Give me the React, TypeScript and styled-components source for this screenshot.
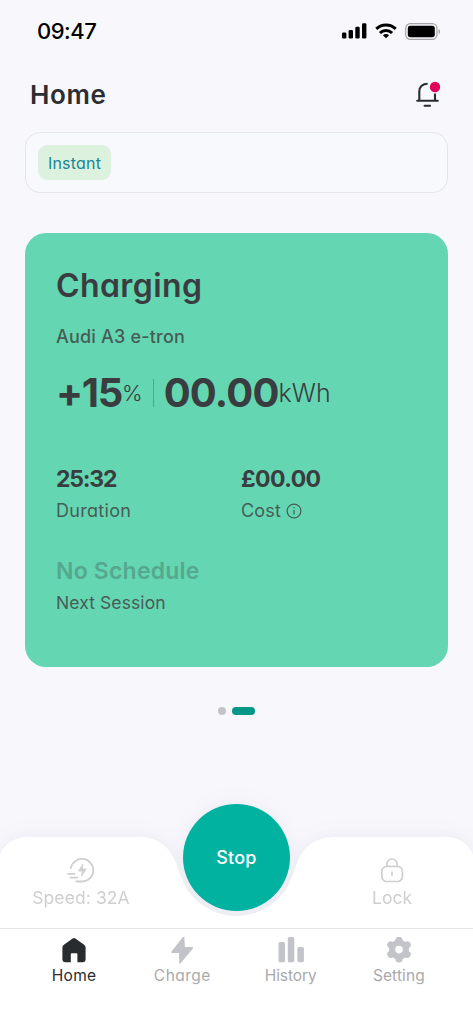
import React from "react";
import styled, { createGlobalStyle } from "styled-components";

const GlobalStyle = createGlobalStyle`
  *, *::before, *::after { box-sizing: border-box; }
  body {
    margin: 0;
    background: #f7f7fc;
    font-family: Inter, "Open Sans", sans-serif;
    font-feature-settings: "cv11" 1;
    color: #2b2d31;
  }
`;

const Screen = styled.div`
  width: 473px;
  height: 1024px;
  display: flex;
  flex-direction: column;
  overflow: hidden;
  background: #f7f7fc;
`;

interface TextProps {
  $size: number;
  $weight?: number;
  $track?: number;
  $color?: string;
  $line?: number;
}

const Text = styled.span<TextProps>`
  display: block;
  white-space: nowrap;
  font-size: ${(p) => p.$size}px;
  font-weight: ${(p) => p.$weight ?? 400};
  letter-spacing: ${(p) => p.$track ?? 0}px;
  color: ${(p) => p.$color ?? "#3a3d40"};
  line-height: ${(p) => p.$line ?? 24}px;
`;

const StatusBar = styled.header`
  height: 62px;
  padding: 0 32px 0 37px;
  display: flex;
  align-items: center;
  justify-content: space-between;
`;

const StatusIcons = styled.div`
  display: flex;
  align-items: center;
  gap: 8px;
`;

const TitleBar = styled.div`
  height: 70px;
  padding: 0 32px 5px 30px;
  display: flex;
  align-items: center;
  justify-content: space-between;
`;

const ModeBar = styled.div`
  height: 61px;
  margin: 0 25px;
  padding: 0 12px;
  display: flex;
  align-items: center;
  border: 1.5px solid #e4e5e9;
  border-radius: 15px;
  background: #f8f9fd;
`;

const Chip = styled.div`
  width: 73px;
  height: 35px;
  display: flex;
  align-items: center;
  justify-content: center;
  border-radius: 9px;
  background: #dcf1de;
`;

const Card = styled.section`
  height: 434px;
  margin: 40px 25px 0;
  padding: 34px 31px 0;
  border-radius: 21px;
  background: #65d6b2;
`;

const VehicleName = styled(Text)`
  margin-top: 20px;
`;

const Reading = styled.div`
  height: 48px;
  margin-top: 20px;
  display: flex;
  align-items: center;
`;

const Rule = styled.div`
  width: 1px;
  height: 28px;
  margin: 0 10px 0 11px;
  background: #4fa58e;
`;

const Stats = styled.div`
  margin-top: 50px;
  display: grid;
  grid-template-columns: 185px 1fr;
`;

const Stat = styled.div`
  display: flex;
  flex-direction: column;
  gap: 8px;
`;

const NextStat = styled(Stat)`
  margin-top: 36px;
`;

const WithIcon = styled.div`
  display: flex;
  align-items: center;
  gap: 5px;
`;

const Pager = styled.div`
  flex: 1;
  padding-top: 40px;
  display: flex;
  justify-content: center;
  gap: 6px;
`;

const Dot = styled.span<{ $active?: boolean }>`
  width: ${(p) => (p.$active ? 23 : 8)}px;
  height: 8px;
  border-radius: 4px;
  background: ${(p) => (p.$active ? "#049787" : "#c3c3c9")};
`;

const Dock = styled.div`
  position: relative;
  height: 91px;
  filter: drop-shadow(0 -1px 9px rgba(70, 74, 110, 0.07));
`;

const DockSurface = styled.div`
  height: 91px;
  padding-top: 19px;
  display: flex;
  justify-content: space-between;
  background: #fff;
  clip-path: path("M0 18C4 7 14 0 28 0H138C158 0 170 10 176 26L180 37A59 59 0 0 0 293 37L297 26C303 10 315 0 335 0H445C459 0 469 7 473 18V91H0Z");
`;

const DockAction = styled.button`
  width: 162px;
  height: 56px;
  padding: 0;
  border: 0;
  background: none;
  font: inherit;
  font-feature-settings: inherit;
  display: flex;
  flex-direction: column;
  align-items: center;
  gap: 2px;
`;

const StopButton = styled.button`
  position: absolute;
  left: 50%;
  top: -33px;
  width: 107px;
  height: 107px;
  margin-left: -53.5px;
  padding: 0;
  border: 0;
  border-radius: 50%;
  background: #02b2a1;
  font: inherit;
  display: flex;
  align-items: center;
  justify-content: center;
`;

const TabBar = styled.nav`
  position: relative;
  height: 96px;
  padding: 8px 20px 0;
  display: grid;
  grid-template-columns: repeat(4, 1fr);
  border-top: 1px solid #e5e5e8;
  background: #fff;
`;

const Tab = styled.div`
  display: flex;
  flex-direction: column;
  align-items: center;
  gap: 1px;
`;

const SignalIcon = () => (
  <svg width="25" height="16" viewBox="0 0 25 16">
    <rect x="0" y="9.5" width="4.4" height="6" rx="1.3" />
    <rect x="6.6" y="7" width="4.4" height="8.5" rx="1.3" />
    <rect x="13.3" y="3.7" width="4.4" height="11.8" rx="1.3" />
    <rect x="20" y="0.3" width="4.4" height="15.2" rx="1.3" />
  </svg>
);

const WifiIcon = () => (
  <svg width="22" height="16" viewBox="0 0 22 16" fill="none" stroke="#000" strokeWidth="3">
    <path d="M1.3 5.9a14 14 0 0 1 19.4 0" />
    <path d="M4.9 10a8.9 8.9 0 0 1 12.2 0" />
    <path d="M11 15.3 7.9 12.2a4.4 4.4 0 0 1 6.2 0z" fill="#000" stroke="none" />
  </svg>
);

const BatteryIcon = () => (
  <svg width="36" height="17" viewBox="0 0 36 17">
    <rect x="0.7" y="0.7" width="31.2" height="15.6" rx="4.6" fill="none" stroke="#a4a4a8" strokeWidth="1.2" />
    <rect x="2.8" y="2.8" width="27" height="11.4" rx="2.6" />
    <path d="M33.6 6v5.2c1.9-.8 1.9-4.4 0-5.2z" fill="#a4a4a8" />
  </svg>
);

const BellIcon = () => (
  <svg width="26" height="28" viewBox="0 0 26 28" fill="none" stroke="#292c30" strokeWidth="2.1">
    <path d="M4.3 19v-8.4C4.3 5.6 7.8 2.8 12.6 2.8M20 12.4V19" />
    <path d="M2.2 19.8h20.6" strokeLinecap="round" />
    <path d="M9.6 24.8h5.4" strokeLinecap="round" />
    <circle cx="20" cy="6" r="5.2" fill="#df0759" stroke="none" />
  </svg>
);

const InfoIcon = () => (
  <svg width="16" height="16" viewBox="0 0 16 16" fill="none" stroke="#465d57" strokeWidth="1.2">
    <circle cx="8" cy="8" r="6.9" />
    <path d="M8 7v4.5" />
    <circle cx="8" cy="4.8" r="0.8" fill="#465d57" stroke="none" />
  </svg>
);

const SpeedIcon = () => (
  <svg width="28" height="28" viewBox="0 0 28 28" fill="none" stroke="#cfcfd1" strokeWidth="1.8" strokeLinecap="round">
    <path d="M3.9 12.2A11.3 11.3 0 1 1 15 25.5H9.3" />
    <path d="M1 17.8h6.4M3.3 21.6h7" />
    <path d="M15.7 8.3 11.5 15h3.7l-.7 5 4.8-7h-3.8z" fill="#cfcfd1" strokeWidth=".8" strokeLinejoin="round" />
  </svg>
);

const LockIcon = () => (
  <svg width="28" height="28" viewBox="0 0 28 28" fill="none" stroke="#cfcfd1" strokeWidth="1.7" strokeLinecap="round">
    <rect x="3.8" y="10.3" width="20.6" height="15.2" rx="5" />
    <path d="M8.8 10.2V8.2a5.2 5.2 0 0 1 10.4 0v2M14 16.4v2.6" />
  </svg>
);

const HomeIcon = () => (
  <svg width="28" height="28" viewBox="0 0 28 28" fill="#292c2e">
    <path d="M12.7 1.6a2.1 2.1 0 0 1 2.6 0l8.5 5.8a3.7 3.7 0 0 1 1.8 3.1v11.7a3 3 0 0 1-3 3H17.4v-7.9a1 1 0 0 0-1-1h-4.6a1 1 0 0 0-1 1v7.9H5.4a3 3 0 0 1-3-3V10.5a3.7 3.7 0 0 1 1.8-3.1z" />
  </svg>
);

const BoltIcon = () => (
  <svg width="28" height="28" viewBox="0 0 28 28" fill="#c3c3ca" stroke="#c3c3ca" strokeWidth="1.6" strokeLinejoin="round">
    <path d="M15.6.4 4 15.2h7.8L12 25.7 24.3 10.9h-8.2z" />
  </svg>
);

const BarsIcon = () => (
  <svg width="28" height="28" viewBox="0 0 28 28" fill="#c3c3ca">
    <rect x="1.5" y="5" width="6.5" height="20.3" rx="1.6" />
    <rect x="10.8" y="0" width="6.5" height="25.3" rx="1.6" />
    <rect x="20.4" y="10" width="6.5" height="15.3" rx="1.6" />
  </svg>
);

const GearIcon = () => (
  <svg width="28" height="28" viewBox="0 0 28 28" fill="#c3c3ca">
    <circle cx="14" cy="12.6" r="10" />
    {[0, 60, 120, 180, 240, 300].map((angle) => (
      <circle key={angle} transform={`rotate(${angle} 14 12.6)`} cx="14" cy="3.1" r="3.5" />
    ))}
    <circle cx="14" cy="12.6" r="3.8" fill="#fff" />
  </svg>
);

const tabs = [
  { label: "Home", icon: <HomeIcon />, active: true, track: 0.3 },
  { label: "Charge", icon: <BoltIcon />, track: 0.5 },
  { label: "History", icon: <BarsIcon />, track: -0.1 },
  { label: "Setting", icon: <GearIcon />, track: 0.1 },
];

export default function App() {
  return (
    <>
      <GlobalStyle />
      <Screen>
        <StatusBar>
          <Text $size={22} $weight={500} $track={-0.5} $color="#000">09:47</Text>
          <StatusIcons>
            <SignalIcon />
            <WifiIcon />
            <BatteryIcon />
          </StatusIcons>
        </StatusBar>

        <TitleBar>
          <Text $size={26} $weight={600} $track={0.6} $color="#2b2d31">Home</Text>
          <BellIcon />
        </TitleBar>

        <ModeBar>
          <Chip>
            <Text $size={16} $track={0.2} $color="#178794">Instant</Text>
          </Chip>
        </ModeBar>

        <Card>
          <Text $size={32} $weight={600} $track={0.4} $line={38}>Charging</Text>
          <VehicleName $size={18} $weight={500} $track={0.2} $color="#465d57">Audi A3 e-tron</VehicleName>
          <Reading>
            <Text $size={40} $weight={700} $track={-1.3} $line={48}>+15</Text>
            <Text $size={22} $weight={300} $track={-1}>%</Text>
            <Rule />
            <Text $size={40} $weight={700} $track={-0.8} $line={48}>00.00</Text>
            <Text $size={25} $weight={300}>kWh</Text>
          </Reading>
          <Stats>
            <Stat>
              <Text $size={23} $weight={700} $track={-1.2}>25:32</Text>
              <Text $size={18} $track={0.3} $color="#465d57">Duration</Text>
            </Stat>
            <Stat>
              <Text $size={23} $weight={700} $track={-0.6}>£00.00</Text>
              <WithIcon>
                <Text $size={18} $track={0.2} $color="#465d57">Cost</Text>
                <InfoIcon />
              </WithIcon>
            </Stat>
          </Stats>
          <NextStat>
            <Text $size={23} $weight={600} $track={0.2} $color="#55a88e">No Schedule</Text>
            <Text $size={17.5} $track={0.1} $color="#465d57">Next Session</Text>
          </NextStat>
        </Card>

        <Pager>
          <Dot />
          <Dot $active />
        </Pager>

        <Dock>
          <DockSurface>
            <DockAction>
              <SpeedIcon />
              <Text $size={17.5} $track={0.1} $color="#cfcfd1">Speed: 32A</Text>
            </DockAction>
            <DockAction>
              <LockIcon />
              <Text $size={17.5} $color="#cfcfd1">Lock</Text>
            </DockAction>
          </DockSurface>
          <StopButton>
            <Text $size={18} $weight={500} $track={0.2} $color="#fff">Stop</Text>
          </StopButton>
        </Dock>

        <TabBar>
          {tabs.map((t) => (
            <Tab key={t.label}>
              {t.icon}
              <Text $size={15.5} $track={t.track} $line={20} $color={t.active ? "#292c2e" : "#a9a9ac"}>
                {t.label}
              </Text>
            </Tab>
          ))}
        </TabBar>
      </Screen>
    </>
  );
}
